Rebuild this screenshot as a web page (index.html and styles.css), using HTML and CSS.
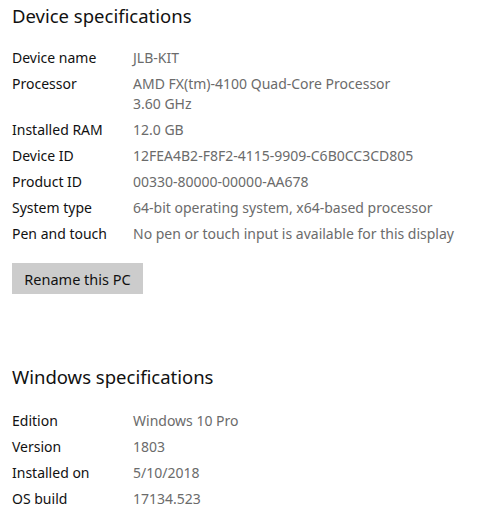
FILE: index.html
```html
<!DOCTYPE html>
<html lang="en">

<head>
    <meta charset="UTF-8">
    <meta name="viewport" content="width=device-width, initial-scale=1.0">
    <title>About</title>
    <link rel="stylesheet" href="styles.css">
</head>

<body>
    <div class="page">
        <section class="section">
            <h2 class="section-title">Device specifications</h2>
            <dl class="specs">
                <dt>Device name</dt>
                <dd>JLB-KIT</dd>
                <dt>Processor</dt>
                <dd>AMD FX(tm)-4100 Quad-Core Processor<br>3.60 GHz</dd>
                <dt>Installed RAM</dt>
                <dd>12.0 GB</dd>
                <dt>Device ID</dt>
                <dd>12FEA4B2-F8F2-4115-9909-C6B0CC3CD805</dd>
                <dt>Product ID</dt>
                <dd>00330-80000-00000-AA678</dd>
                <dt>System type</dt>
                <dd>64-bit operating system, x64-based processor</dd>
                <dt>Pen and touch</dt>
                <dd>No pen or touch input is available for this display</dd>
            </dl>
            <button class="btn">Rename this PC</button>
        </section>

        <section class="section">
            <h2 class="section-title">Windows specifications</h2>
            <dl class="specs">
                <dt>Edition</dt>
                <dd>Windows 10 Pro</dd>
                <dt>Version</dt>
                <dd>1803</dd>
                <dt>Installed on</dt>
                <dd>5/10/2018</dd>
                <dt>OS build</dt>
                <dd>17134.523</dd>
            </dl>
        </section>
    </div>
</body>

</html>
```

FILE: styles.css
```css
body {
    font-family: "Noto Sans", "Open Sans", sans-serif;
    margin: 0;
    padding: 0;
    background-color: #fff;
    color: #111;
}

.page {
    padding: 0 12px;
}

.section-title {
    font-size: 18.5px;
    font-weight: normal;
    line-height: 32px;
    margin: 0 0 16px 0;
    color: #111;
}

.section + .section {
    margin-top: 67px;
}

.section + .section .section-title {
    margin-bottom: 18px;
}

.specs {
    display: grid;
    grid-template-columns: 121px auto;
    row-gap: 6px;
    margin: 0;
    font-size: 14px;
    line-height: 20px;
}

.specs dt {
    color: #111;
}

.specs dd {
    margin: 0;
    color: #6b6b6b;
}

.btn {
    margin-top: 19px;
    width: 131px;
    height: 31px;
    padding: 0;
    background-color: #cccccc;
    color: #111;
    border: none;
    font-family: inherit;
    font-size: 14.5px;
    cursor: pointer;
}

.btn:hover {
    background-color: #bbbbbb;
}
```
